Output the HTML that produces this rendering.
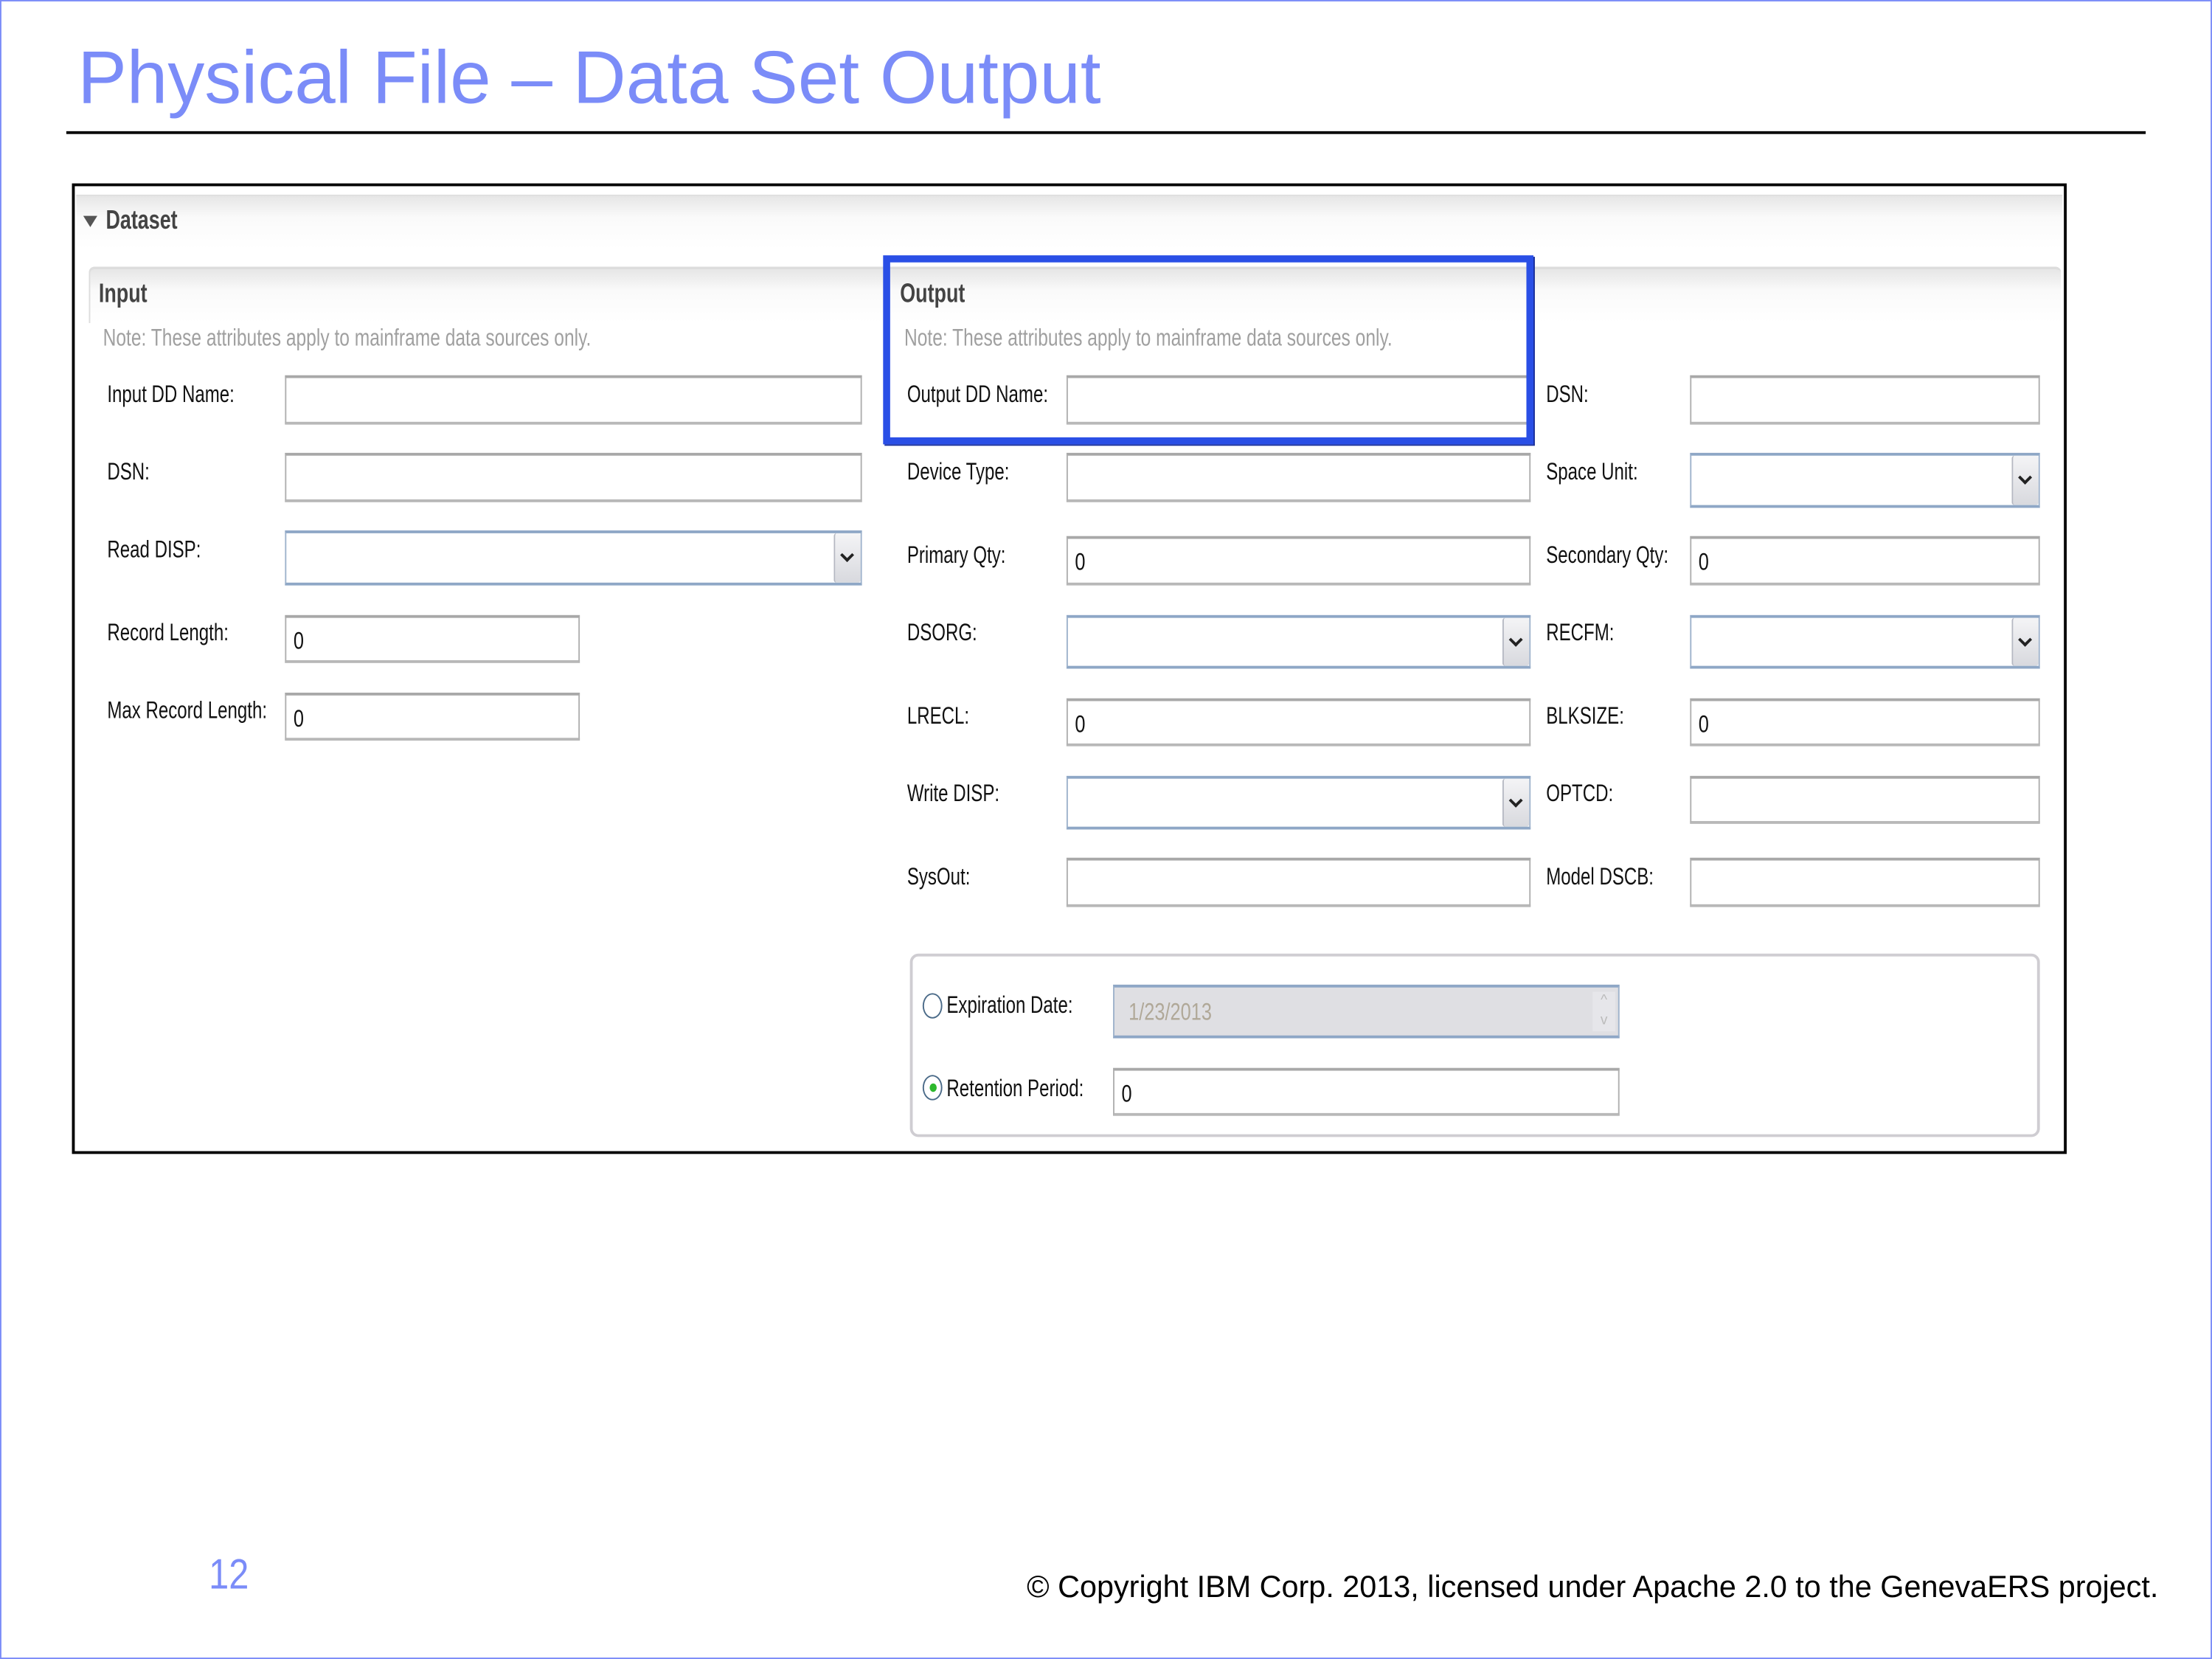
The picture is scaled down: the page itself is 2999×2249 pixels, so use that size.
<!DOCTYPE html>
<html><head><meta charset="utf-8"><style>
html,body{margin:0;padding:0;background:#fff;}
body{width:2999px;height:2249px;overflow:hidden;position:relative;}
#s{position:absolute;left:0;top:0;width:1568px;height:1176px;transform:scale(1.91263,1.91241);transform-origin:0 0;font-family:"Liberation Sans",Arial,sans-serif;}
.a{position:absolute;}
.brd{left:0;top:0;width:1566px;height:1174px;border:1px solid #7b8cf8;}
.title{left:55px;top:25px;font-size:53px;color:#7b8cf8;white-space:nowrap;transform:scaleX(0.985);transform-origin:0 0;line-height:62px;}
.hr{left:47px;top:93px;width:1474px;height:2px;background:#000;}
.panel{left:51px;top:130px;width:1410px;height:684px;border:2px solid #000;background:#fff;}
.lbl{font-size:17px;color:#111;white-space:nowrap;transform:scaleX(0.74);transform-origin:0 0;}
.f{border:1px solid #b0b0b0;border-top:2px solid #a8a8a8;border-bottom:2px solid #b8b8b8;background:#fff;box-sizing:border-box;}
.c{border:1px solid #9fb3cc;border-top:2px solid #8ea7c6;border-bottom:2px solid #8ea7c6;background:#fff;box-sizing:border-box;}
.c .btn{position:absolute;right:0;top:0;bottom:0;width:18px;background:linear-gradient(#f4f4f6,#d8d9de);border-left:1px solid #b5b8c2;border-radius:2px;}
.c .btn:after{content:"";position:absolute;left:5px;top:12px;width:5px;height:5px;border-right:2px solid #222;border-bottom:2px solid #222;transform:rotate(45deg);}
.v{font-size:17px;color:#111;position:absolute;left:5px;top:7px;transform:scaleX(0.78);transform-origin:0 0;}
.hdr{background:linear-gradient(#e6e6e6,#fafafa 40%,#fff);}
.bold{font-weight:bold;color:#444;}
.note{font-size:17px;color:#a0a0a0;white-space:nowrap;transform:scaleX(0.756);transform-origin:0 0;}
</style></head><body><div id="s">
<div class="a brd"></div>
<div class="a title">Physical File – Data Set Output</div>
<div class="a hr"></div>
<div class="a panel"></div>
<div class="a hdr" style="left:54px;top:138px;width:1408px;height:38px;border-top:1px solid #ddd;"></div>
<div class="a" style="left:59px;top:153px;width:0;height:0;border-left:5px solid transparent;border-right:5px solid transparent;border-top:8px solid #555;"></div>
<div class="a lbl bold" style="left:75px;top:146px;font-size:19px;">Dataset</div>
<div class="a hdr" style="left:63px;top:189px;width:1397px;height:38px;border-top:2px solid #ddd;border-left:1px solid #ddd;border-radius:4px 4px 0 0;"></div>
<div class="a lbl bold" style="left:70px;top:198px;font-size:19px;">Input</div>
<div class="a lbl bold" style="left:638px;top:198px;font-size:19px;">Output</div>
<div class="a note" style="left:73px;top:230px;">Note: These attributes apply to mainframe data sources only.</div>
<div class="a note" style="left:641px;top:230px;">Note: These attributes apply to mainframe data sources only.</div>

<div class="a lbl" style="left:76px;top:270px;">Input DD Name:</div>
<div class="a f" style="left:202px;top:266px;width:409px;height:35px;"></div>
<div class="a lbl" style="left:76px;top:325px;">DSN:</div>
<div class="a f" style="left:202px;top:321px;width:409px;height:35px;"></div>
<div class="a lbl" style="left:76px;top:380px;">Read DISP:</div>
<div class="a c" style="left:202px;top:376px;width:409px;height:39px;"><div class="btn"></div></div>
<div class="a lbl" style="left:76px;top:439px;">Record Length:</div>
<div class="a f" style="left:202px;top:436px;width:209px;height:34px;"><span class="v">0</span></div>
<div class="a lbl" style="left:76px;top:494px;">Max Record Length:</div>
<div class="a f" style="left:202px;top:491px;width:209px;height:34px;"><span class="v">0</span></div>

<div class="a lbl" style="left:643px;top:270px;">Output DD Name:</div>
<div class="a f" style="left:756px;top:266px;width:329px;height:35px;"></div>
<div class="a lbl" style="left:643px;top:325px;">Device Type:</div>
<div class="a f" style="left:756px;top:321px;width:329px;height:35px;"></div>
<div class="a lbl" style="left:643px;top:384px;">Primary Qty:</div>
<div class="a f" style="left:756px;top:380px;width:329px;height:35px;"><span class="v">0</span></div>
<div class="a lbl" style="left:643px;top:439px;">DSORG:</div>
<div class="a c" style="left:756px;top:436px;width:329px;height:38px;"><div class="btn"></div></div>
<div class="a lbl" style="left:643px;top:498px;">LRECL:</div>
<div class="a f" style="left:756px;top:495px;width:329px;height:34px;"><span class="v">0</span></div>
<div class="a lbl" style="left:643px;top:553px;">Write DISP:</div>
<div class="a c" style="left:756px;top:550px;width:329px;height:38px;"><div class="btn"></div></div>
<div class="a lbl" style="left:643px;top:612px;">SysOut:</div>
<div class="a f" style="left:756px;top:608px;width:329px;height:35px;"></div>

<div class="a lbl" style="left:1096px;top:270px;">DSN:</div>
<div class="a f" style="left:1198px;top:266px;width:248px;height:35px;"></div>
<div class="a lbl" style="left:1096px;top:325px;">Space Unit:</div>
<div class="a c" style="left:1198px;top:321px;width:248px;height:39px;"><div class="btn"></div></div>
<div class="a lbl" style="left:1096px;top:384px;">Secondary Qty:</div>
<div class="a f" style="left:1198px;top:380px;width:248px;height:35px;"><span class="v">0</span></div>
<div class="a lbl" style="left:1096px;top:439px;">RECFM:</div>
<div class="a c" style="left:1198px;top:436px;width:248px;height:38px;"><div class="btn"></div></div>
<div class="a lbl" style="left:1096px;top:498px;">BLKSIZE:</div>
<div class="a f" style="left:1198px;top:495px;width:248px;height:34px;"><span class="v">0</span></div>
<div class="a lbl" style="left:1096px;top:553px;">OPTCD:</div>
<div class="a f" style="left:1198px;top:550px;width:248px;height:34px;"></div>
<div class="a lbl" style="left:1096px;top:612px;">Model DSCB:</div>
<div class="a f" style="left:1198px;top:608px;width:248px;height:35px;"></div>

<div class="a" style="left:645px;top:676px;width:801px;height:130px;border:2px solid #cfcdd2;border-radius:6px;box-sizing:border-box;"></div>
<div class="a" style="left:654px;top:704px;width:12px;height:16px;border:1.5px solid #4a6a88;border-radius:50%;background:#fff;"></div>
<div class="a lbl" style="left:671px;top:703px;">Expiration Date:</div>
<div class="a c" style="left:789px;top:698px;width:359px;height:38px;background:#dfdfe3;"><span class="v" style="color:#b0a898;top:8px;left:10px;">1/23/2013</span><div style="position:absolute;right:2px;top:3px;width:16px;bottom:3px;background:#e6e6ea;color:#bbb;font-size:10px;text-align:center;line-height:14px;">^<br>v</div></div>
<div class="a" style="left:654px;top:762px;width:12px;height:16px;border:1.5px solid #4a6a88;border-radius:50%;background:#fff;"></div>
<div class="a" style="left:659px;top:768px;width:5px;height:6px;border-radius:50%;background:#2db82d;"></div>
<div class="a lbl" style="left:671px;top:762px;">Retention Period:</div>
<div class="a f" style="left:789px;top:757px;width:359px;height:34px;"><span class="v">0</span></div>

<div class="a" style="left:626px;top:181px;width:461px;height:134px;border:5px solid #2a4fe6;box-sizing:border-box;box-shadow:1px 1px 0 #1a2f9a;"></div>

<div class="a" style="left:148px;top:1100px;font-size:30px;color:#7b8cf8;transform:scaleX(0.85);transform-origin:0 0;">12</div>
<div class="a" style="right:38px;top:1112px;font-size:22px;color:#000;white-space:nowrap;transform:scaleX(0.983);transform-origin:100% 0;">© Copyright IBM Corp. 2013, licensed under Apache 2.0 to the GenevaERS project.</div>
</div></body></html>
